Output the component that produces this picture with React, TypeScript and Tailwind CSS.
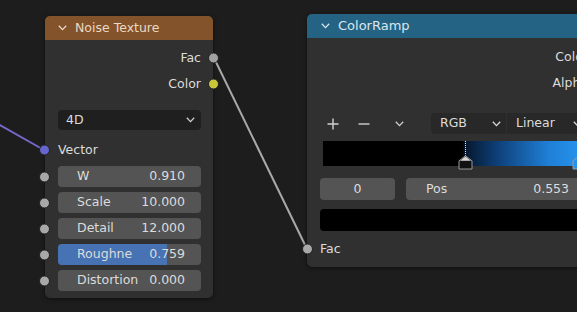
import React from "react";

const font = { fontFamily: '"DejaVu Sans", "Liberation Sans", sans-serif' };

function Chevron({ className = "" }: { className?: string }) {
  return (
    <svg width="9" height="6" viewBox="0 0 9 6" className={className}>
      <polyline points="0.8,0.8 4.5,4.6 8.2,0.8" fill="none" stroke="currentColor" strokeWidth="1.3" />
    </svg>
  );
}

function Field({ label, value, fill }: { label: string; value: string; fill?: boolean }) {
  return (
    <div className="relative h-[21px] rounded-[4px] bg-[#545454] overflow-hidden">
      {fill && <div className="absolute left-0 top-0 bottom-0 w-[75.9%] bg-[#4772b3]" />}
      <div className="relative flex h-full items-center justify-between pl-[19px] pr-[16px] text-[#dcdcdc]">
        <span>{label}</span>
        <span>{value}</span>
      </div>
    </div>
  );
}

function FieldRow({ label, value, fill }: { label: string; value: string; fill?: boolean }) {
  return (
    <div className="relative">
      <Field label={label} value={value} fill={fill} />
      <span className="absolute left-[-19px] top-1/2 -translate-y-1/2 w-[11px] h-[11px] rounded-full bg-[#a8a8a8] border border-[#222]" />
    </div>
  );
}

export default function App() {
  return (
    <div className="relative w-[577px] h-[312px] overflow-hidden bg-[#1d1d1d] text-[12.5px]" style={font}>
      {/* links */}
      <svg className="absolute inset-0" width="577" height="312">
        <line x1="-2" y1="124" x2="44" y2="150" stroke="#7568c9" strokeWidth="2" />
        <line x1="214" y1="58" x2="307" y2="249" stroke="#a9a9a9" strokeWidth="2" />
      </svg>

      {/* Noise Texture node */}
      <div className="absolute left-[45px] top-[16px] w-[168px] h-[282px] rounded-[5px] bg-[#303030] shadow-[0_1px_4px_rgba(0,0,0,0.5)]">
        <div className="flex h-[24px] items-center gap-[8px] rounded-t-[5px] bg-[#83532b] pl-[13px] text-[#ead9c6]">
          <Chevron />
          <span>Noise Texture</span>
        </div>
        <div className="flex flex-col pl-[13px] pr-[12px] pt-[5px]">
          <div className="relative flex h-[26px] items-center justify-end text-[#dcdcdc]">
            Fac
            <span className="absolute right-[-18px] top-1/2 -translate-y-1/2 w-[11px] h-[11px] rounded-full bg-[#a1a1a1] border border-[#222]" />
          </div>
          <div className="relative flex h-[26px] items-center justify-end text-[#dcdcdc]">
            Color
            <span className="absolute right-[-18px] top-1/2 -translate-y-1/2 w-[11px] h-[11px] rounded-full bg-[#c7c83a] border border-[#222]" />
          </div>
          <div className="mt-[13px] flex h-[20px] items-center justify-between rounded-[4px] bg-[#1f1f1f] pl-[8px] pr-[6px] text-[#dcdcdc]">
            <span>4D</span>
            <Chevron className="text-[#cfcfcf]" />
          </div>
          <div className="relative mt-[7px] flex h-[26px] items-center text-[#dcdcdc]">
            Vector
            <span className="absolute left-[-19px] top-1/2 -translate-y-1/2 w-[11px] h-[11px] rounded-full bg-[#6565cb] border border-[#222]" />
          </div>
          <div className="mt-[3px] flex flex-col gap-[5px]">
            <FieldRow label="W" value="0.910" />
            <FieldRow label="Scale" value="10.000" />
            <FieldRow label="Detail" value="12.000" />
            <FieldRow label="Roughne" value="0.759" fill />
            <FieldRow label="Distortion" value="0.000" />
          </div>
        </div>
      </div>

      {/* ColorRamp node */}
      <div className="absolute left-[307px] top-[14px] w-[293px] h-[253px] rounded-[5px] bg-[#303030] shadow-[0_1px_4px_rgba(0,0,0,0.5)]">
        <div className="flex h-[24px] items-center gap-[8px] rounded-t-[5px] bg-[#246384] pl-[14px] text-[#dbe6ee] text-[13px]">
          <Chevron />
          <span>ColorRamp</span>
        </div>
        <div className="flex flex-col pl-[13px] pr-[12px] pt-[6px]">
          <div className="flex h-[26px] items-center justify-end text-[#dcdcdc]">Color</div>
          <div className="flex h-[26px] items-center justify-end text-[#dcdcdc]">Alpha</div>
          <div className="mt-[17px] flex h-[21px] items-center text-[#d0d0d0]">
            <svg width="12" height="12" viewBox="0 0 12 12" className="ml-[7px]">
              <path d="M6 0.5V11.5M0.5 6H11.5" stroke="currentColor" strokeWidth="1.4" />
            </svg>
            <svg width="12" height="12" viewBox="0 0 12 12" className="ml-[19px]">
              <path d="M0.5 6H11.5" stroke="currentColor" strokeWidth="1.4" />
            </svg>
            <Chevron className="ml-[25px]" />
            <div className="ml-[27px] flex h-[21px] w-[75px] items-center justify-between rounded-l-[4px] bg-[#282828] pl-[9px] pr-[5px] text-[#dcdcdc]">
              <span>RGB</span>
              <Chevron />
            </div>
            <div className="ml-[1px] flex h-[21px] w-[80px] items-center justify-between rounded-r-[4px] bg-[#282828] pl-[9px] pr-[5px] text-[#dcdcdc]">
              <span>Linear</span>
              <Chevron />
            </div>
          </div>
          <div className="relative ml-[3px] mt-[7px] h-[25px] w-[256px] bg-[linear-gradient(90deg,#000_0%,#000_54.5%,#06182e_55.5%,#0e3f78_68%,#1f7fd6_88%,#2692ec_100%)]">
            <div className="absolute left-[142px] top-0 h-[17px] border-l border-dotted border-[#e8e8e8]" />
            <svg width="15" height="15" viewBox="0 0 15 15" className="absolute left-[135px] top-[14px]">
              <path d="M7.5 0.8L14 5.8V14H1V5.8Z" fill="#111" stroke="#9a9a9a" strokeWidth="1" />
              <path d="M7.5 1.5L13 5.8H2Z" fill="#d8d8d8" />
            </svg>
            <svg width="15" height="15" viewBox="0 0 15 15" className="absolute left-[249px] top-[14px]">
              <path d="M7.5 0.8L14 5.8V14H1V5.8Z" fill="#2692ec" stroke="#9a9a9a" strokeWidth="1" />
            </svg>
          </div>
          <div className="mt-[12px] flex h-[22px] items-center gap-[11px] text-[#dcdcdc]">
            <div className="flex h-full w-[75px] items-center justify-center rounded-[4px] bg-[#545454]">0</div>
            <div className="flex h-full w-[179px] items-center justify-between rounded-[4px] bg-[#545454] pl-[20px] pr-[16px]">
              <span>Pos</span>
              <span>0.553</span>
            </div>
          </div>
          <div className="mt-[9px] h-[22px] w-[270px] rounded-[4px] bg-black" />
          <div className="relative mt-[5px] flex h-[26px] items-center text-[#dcdcdc]">
            Fac
            <span className="absolute left-[-18px] top-1/2 -translate-y-1/2 w-[11px] h-[11px] rounded-full bg-[#a8a8a8] border border-[#222]" />
          </div>
        </div>
      </div>
    </div>
  );
}
